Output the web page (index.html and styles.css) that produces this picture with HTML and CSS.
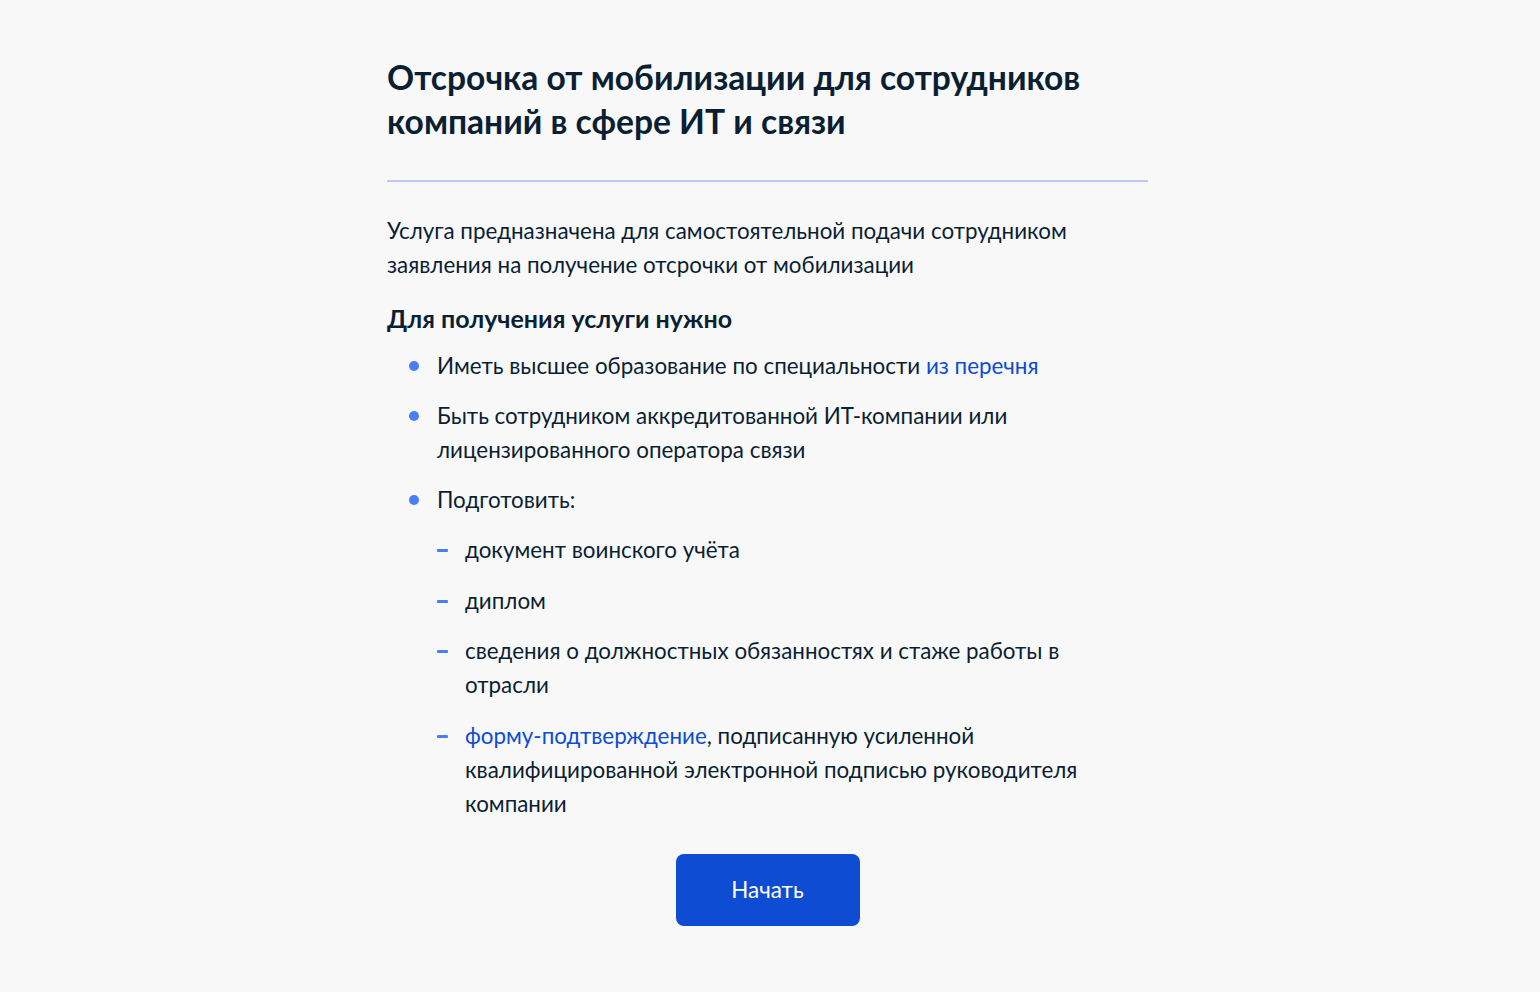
FILE: index.html
```html
<!DOCTYPE html>
<html lang="ru">
<head>
<meta charset="utf-8">
<title>Отсрочка от мобилизации</title>
<link rel="stylesheet" href="styles.css">
</head>
<body>
<main class="page">
  <h1 class="title">Отсрочка от мобилизации для сотрудников компаний в сфере ИТ и связи</h1>
  <hr class="divider">
  <p class="lead">Услуга предназначена для самостоятельной подачи сотрудником заявления на получение отсрочки от мобилизации</p>
  <h2 class="subtitle">Для получения услуги нужно</h2>
  <ul class="list">
    <li class="item">Иметь высшее образование по специальности <a class="link" href="#">из перечня</a></li>
    <li class="item">Быть сотрудником аккредитованной ИТ-компании или лицензированного оператора связи</li>
    <li class="item">Подготовить:
      <ul class="sublist">
        <li class="subitem">документ воинского учёта</li>
        <li class="subitem">диплом</li>
        <li class="subitem">сведения о должностных обязанностях и стаже работы в отрасли</li>
        <li class="subitem"><a class="link" href="#">форму-подтверждение</a>, подписанную усиленной квалифицированной электронной подписью руководителя компании</li>
      </ul>
    </li>
  </ul>
  <div class="actions">
    <button class="btn" type="button">Начать</button>
  </div>
</main>
</body>
</html>
```

FILE: styles.css
```css
html, body {
  margin: 0;
  padding: 0;
  background: #f8f8f8;
}
body {
  font-family: Lato, "Noto Sans", sans-serif;
  color: #0b1f33;
  padding-right: 5px;
}
.page {
  width: 761px;
  margin: 0 auto;
  padding-top: 55px;
}
.title {
  margin: 0;
  font-size: 33.6px;
  line-height: 44px;
  font-weight: 700;
  width: 720px;
}
.divider {
  border: 0;
  height: 2px;
  background: #b9c9f1;
  margin: 37px 0 0;
}
.lead {
  margin: 32px 0 0;
  font-size: 22.4px;
  line-height: 34px;
  width: 713px;
}
.subtitle {
  margin: 19px 0 0;
  font-size: 25px;
  line-height: 34px;
  font-weight: 700;
}
.list {
  list-style: none;
  margin: 14px 0 0;
  padding: 0 0 0 50px;
  width: 663px;
  font-size: 22.4px;
  line-height: 34px;
}
.item {
  position: relative;
  margin-bottom: 16px;
}
.item::before {
  content: "";
  position: absolute;
  left: -28px;
  top: 12px;
  width: 10px;
  height: 10px;
  border-radius: 50%;
  background: #4a7ef5;
}
.sublist {
  list-style: none;
  margin: 16px 0 0;
  padding: 0 0 0 28px;
}
.subitem {
  position: relative;
  margin-bottom: 16.5px;
}
.subitem:last-child {
  margin-bottom: 0;
}
.subitem::before {
  content: "";
  position: absolute;
  left: -28px;
  top: 16px;
  width: 11px;
  height: 3px;
  border-radius: 1px;
  background: #4a7ef5;
}
.link {
  color: #0d4cd3;
  text-decoration: none;
}
.actions {
  display: flex;
  justify-content: center;
  margin-top: 33px;
}
.btn {
  width: 184px;
  height: 72px;
  border: 0;
  border-radius: 8px;
  background: #0d4cd3;
  color: #ffffff;
  font-family: Lato, "Noto Sans", sans-serif;
  font-size: 22.4px;
}
```
